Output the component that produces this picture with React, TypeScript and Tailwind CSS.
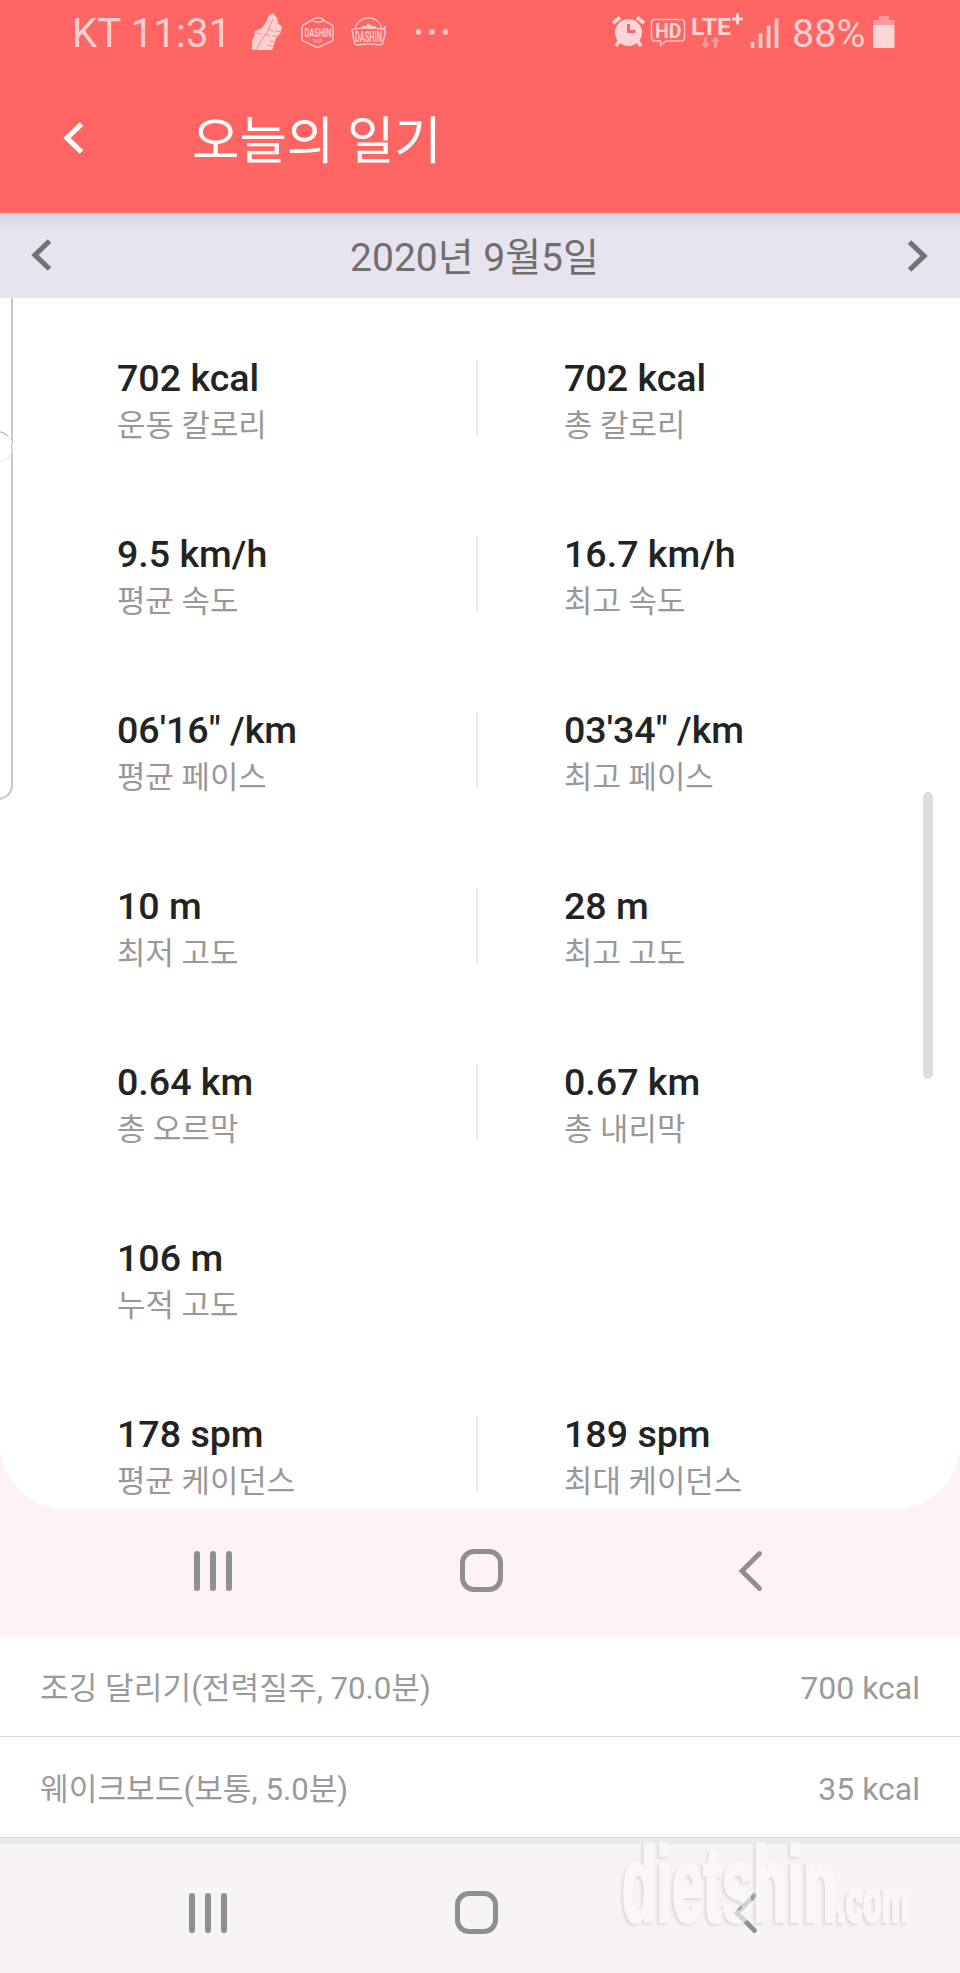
type Stat = { value: string; label: string };

const STATS: [Stat, Stat?][] = [
  [{ value: "702 kcal", label: "운동 칼로리" }, { value: "702 kcal", label: "총 칼로리" }],
  [{ value: "9.5 km/h", label: "평균 속도" }, { value: "16.7 km/h", label: "최고 속도" }],
  [{ value: "06'16\" /km", label: "평균 페이스" }, { value: "03'34\" /km", label: "최고 페이스" }],
  [{ value: "10 m", label: "최저 고도" }, { value: "28 m", label: "최고 고도" }],
  [{ value: "0.64 km", label: "총 오르막" }, { value: "0.67 km", label: "총 내리막" }],
  [{ value: "106 m", label: "누적 고도" }],
  [{ value: "178 spm", label: "평균 케이던스" }, { value: "189 spm", label: "최대 케이던스" }],
];

const EXERCISES = [
  { name: "조깅 달리기(전력질주, 70.0분)", kcal: "700 kcal" },
  { name: "웨이크보드(보통, 5.0분)", kcal: "35 kcal" },
];

function NotificationIcons() {
  return (
    <svg width="212" height="68" viewBox="240 0 212 68" fill="none">
      {/* running shoe */}
      <path
        d="M269 15l4-2 4 5 1 5 4 4-2 7-4 4-3 10-1 2h-18l-2-1 0-8 2-4 1-6 7-3 4-6z"
        fill="#ffd0d0"
      />
      <path
        d="M273 19l-4 10-8 12-5 9M268 29l5 2M265 34l5 2M275 31l6 1M272 36l7 0M270 41l5 1M267 45l6 1M256 33l6 1"
        stroke="#ff8a88"
        strokeWidth="1"
      />
      {/* hexagon badge */}
      <path
        d="M312 20l-9 5q-1 1-1 2v12q0 1 1 2l13 6q1.500 .6 3 0l13-6q1-1 1-2V27q0-1-1-2l-9-5"
        stroke="#ffc0c0"
        strokeWidth="1.500"
      />
      <path d="M313 20q0-2 5-2t5 2-5 2-5-2z" stroke="#ffc8c8" strokeWidth="1.500" />
      <text x="304.500" y="37" fontSize="13" fontWeight="700" fill="#ffc8c8" textLength="27" lengthAdjust="spacingAndGlyphs">DASHIN</text>
      <text x="313" y="42.500" fontSize="4.500" fontWeight="700" fill="#ffb8b8" textLength="9" lengthAdjust="spacingAndGlyphs">SHOP</text>
      {/* banner badge */}
      <path d="M355.500 29a13 11 0 0 1 26 0" stroke="#ffc0c0" strokeWidth="1.500" />
      <path d="M360 29l3-3 3 0 2-3 4 3 3 0 3 3z" fill="#ffc8c8" />
      <path
        d="M352 29.500q16-3 31 0l2-3-.5 4 1 1-3 12-2 1.500q-12-2-24 0l-2-1.500z"
        stroke="#ffc4c4"
        strokeWidth="1.500"
        strokeLinejoin="round"
      />
      <text x="355" y="42" fontSize="15" fontWeight="700" fill="#ffc8c8" textLength="27" lengthAdjust="spacingAndGlyphs">DASHIN</text>
      <g fill="#ffcccc">
        <circle cx="418.500" cy="32" r="2.800" />
        <circle cx="432" cy="32" r="2.800" />
        <circle cx="445.500" cy="32" r="2.800" />
      </g>
    </svg>
  );
}

function SystemIcons() {
  return (
    <svg width="175" height="68" viewBox="608 0 175 68" fill="none">
      {/* alarm */}
      <circle cx="628.500" cy="32.500" r="13.500" fill="#ffd6d7" />
      <path d="M613 23l7-5.500M644 23l-7-5.500" stroke="#ffd6d7" strokeWidth="4" />
      <path d="M619.500 41l-3.500 5M637.500 41l3.500 5" stroke="#ffd6d7" strokeWidth="3.600" />
      <path d="M628.500 24v7.500h7" stroke="#ff6562" strokeWidth="3" />
      {/* HD voice */}
      <path
        d="M655 19.500h26q3.500 0 3.500 3.500v14.500q0 3.500-3.500 3.500h-15l-5.500 4.500v-4.500h-5.500q-3.500 0-3.500-3.500V23q0-3.500 3.500-3.500z"
        stroke="#ffc4c4"
        strokeWidth="1.500"
      />
      <text x="655" y="38" fontSize="21" fontWeight="700" fill="#ffd3d4" textLength="26.500" lengthAdjust="spacingAndGlyphs">HD</text>
      {/* LTE+ */}
      <text x="691" y="34.500" fontSize="23" fontWeight="700" fill="#ffd3d4" textLength="40" lengthAdjust="spacingAndGlyphs">LTE</text>
      <path d="M737.500 13.500v11M732 19h11" stroke="#ffd3d4" strokeWidth="3" />
      <path d="M705.500 37v7M715.500 48v-7" stroke="#ff9694" strokeWidth="3" />
      <path d="M701 43h9l-4.500 6zM711 42h9l-4.500-6z" fill="#ff9694" />
      <path d="M752.500 42v6M760.500 33.500v14.500M768.500 25.500v22.500M776.500 18.500v29.500" stroke="#ffccce" strokeWidth="3.800" />
    </svg>
  );
}

function Chevron({ right, className }: { right?: boolean; className?: string }) {
  return (
    <svg width="22" height="34" viewBox="0 0 22 34" fill="none" className={className}>
      <path
        d={right ? "M2.500 3L17 17L2.500 31" : "M19.500 3L5 17L19.500 31"}
        stroke="currentColor"
        strokeWidth="5.200"
      />
    </svg>
  );
}

function NavBar({ className }: { className: string }) {
  return (
    <div className={`flex items-center text-[#8e8f8e] ${className}`}>
      <div className="flex gap-[10px]">
        <span className="h-10 w-[6px] rounded-full bg-current" />
        <span className="h-10 w-[6px] rounded-full bg-current" />
        <span className="h-10 w-[6px] rounded-full bg-current" />
      </div>
      <div className="ml-[228px] h-[43px] w-[43px] rounded-[14px] border-[5px] border-current" />
      <svg width="25" height="42" viewBox="0 0 25 42" fill="none" className="ml-[235px]">
        <path d="M21.500 3.500L4 21L21.500 38.500" stroke="currentColor" strokeWidth="4.800" strokeLinecap="round" />
      </svg>
    </div>
  );
}

function StatCell({ value, label }: Stat) {
  return (
    <div>
      <p className="text-[37.600px] leading-[49px] font-medium text-[#222423]">{value}</p>
      <p className="text-[30.900px] leading-[46px] text-[#999799]">{label}</p>
    </div>
  );
}

export default function App() {
  return (
    <div className="relative flex h-[1973px] w-[960px] flex-col overflow-hidden bg-white font-['Roboto','Noto_Sans_CJK_KR',sans-serif]">
      <header className="h-[213px] shrink-0 bg-[#ff6562]">
        <div className="flex h-[68px] items-center text-[39px] whitespace-nowrap text-[#ffd0d1]">
          <span className="ml-[72px] w-[168px] text-[40px] tracking-[0.2px]">KT 11:31</span>
          <NotificationIcons />
          <div className="ml-[156px]">
            <SystemIcons />
          </div>
          <span className="ml-[9px] w-[81px] text-[39.500px]">88%</span>
          <svg width="22" height="68" viewBox="0 0 22 68">
            <path d="M6 16h10v4h5.500v5H0v-5h6z" fill="#ff9c9b" />
            <path d="M0 25h21.500v23H0z" fill="#ffd6d7" />
          </svg>
        </div>
        <div className="flex h-[145px] items-center">
          <Chevron className="mb-[6px] ml-[62px] text-white" />
          <h1 className="mt-[2px] ml-[108px] text-[51.500px] leading-[60px] text-white">오늘의 일기</h1>
        </div>
      </header>

      <div className="flex h-[85px] shrink-0 items-center bg-[#e7e3ef] bg-linear-to-b from-[#d3d3dc] to-[#e7e3ef] to-18% px-[30px] text-[#737373]">
        <Chevron className="mb-px" />
        <span className="mt-[4px] flex-1 pr-[10px] text-center text-[39px] leading-[50px] text-[#6f6f70]">2020년 9월5일</span>
        <Chevron right className="mr-px" />
      </div>

      <div className="shrink-0 bg-[#fef2f6]">
        <main className="relative flex h-[1211px] flex-col gap-20 overflow-hidden rounded-b-[66px] bg-white pt-14">
          {STATS.map(([left, right]) => (
            <div key={left.label} className="flex h-24 pl-[117px]">
              <div className="w-[359px]">
                <StatCell {...left} />
              </div>
              {right && (
                <>
                  <div className="mt-[6px] mr-[86px] h-[76px] w-[2px] bg-[#ebeaec]" />
                  <StatCell {...right} />
                </>
              )}
            </div>
          ))}
          {/* edge of the drawer that peeks in from the left */}
          <div className="absolute top-0 -left-10 h-[502px] w-[53px] rounded-br-[15px] border-r-2 border-b-2 border-[#c9c6c9]" />
          <div className="absolute top-[133px] -left-[19px] size-8 rounded-full border-[1.500px] border-[#e9e8ea] border-t-[#a9a8aa]" />
          <div className="absolute top-[494px] left-[923px] h-[287px] w-[10px] rounded-full bg-[#dddcde]" />
        </main>
        <NavBar className="h-[127px] pb-[4px] pl-[194px]" />
      </div>

      <ul className="shrink-0">
        {EXERCISES.map(ex => (
          <li
            key={ex.name}
            className="flex h-[101px] items-center justify-between border-b border-[#dadadb] px-10 pt-[6px] text-[31.200px] text-[#9a9a9b]"
          >
            <span>{ex.name}</span>
            <span className="pb-[2px] text-[32px]">{ex.kcal}</span>
          </li>
        ))}
      </ul>

      <footer className="relative h-[135px] shrink-0 border-t-[6px] border-[#ece9ed] bg-[#f7f3f7]">
        <NavBar className="h-[129px] pt-2 pl-[189px]" />
        <svg
          width="310"
          height="140"
          viewBox="618 1818 310 140"
          className="absolute -top-[26px] left-[618px] opacity-65 drop-shadow-[-2px_2px_1px_#d2ced4]"
          fill="#fdf8fd"
          stroke="#fdf8fd"
          strokeWidth="4"
          fontFamily="Liberation Sans, sans-serif"
          fontWeight="700"
        >
          <text transform="translate(622 1921) scale(.53 1)" fontSize="106">
            dietshin<tspan fontSize="58">.com</tspan>
          </text>
        </svg>
      </footer>
    </div>
  );
}
